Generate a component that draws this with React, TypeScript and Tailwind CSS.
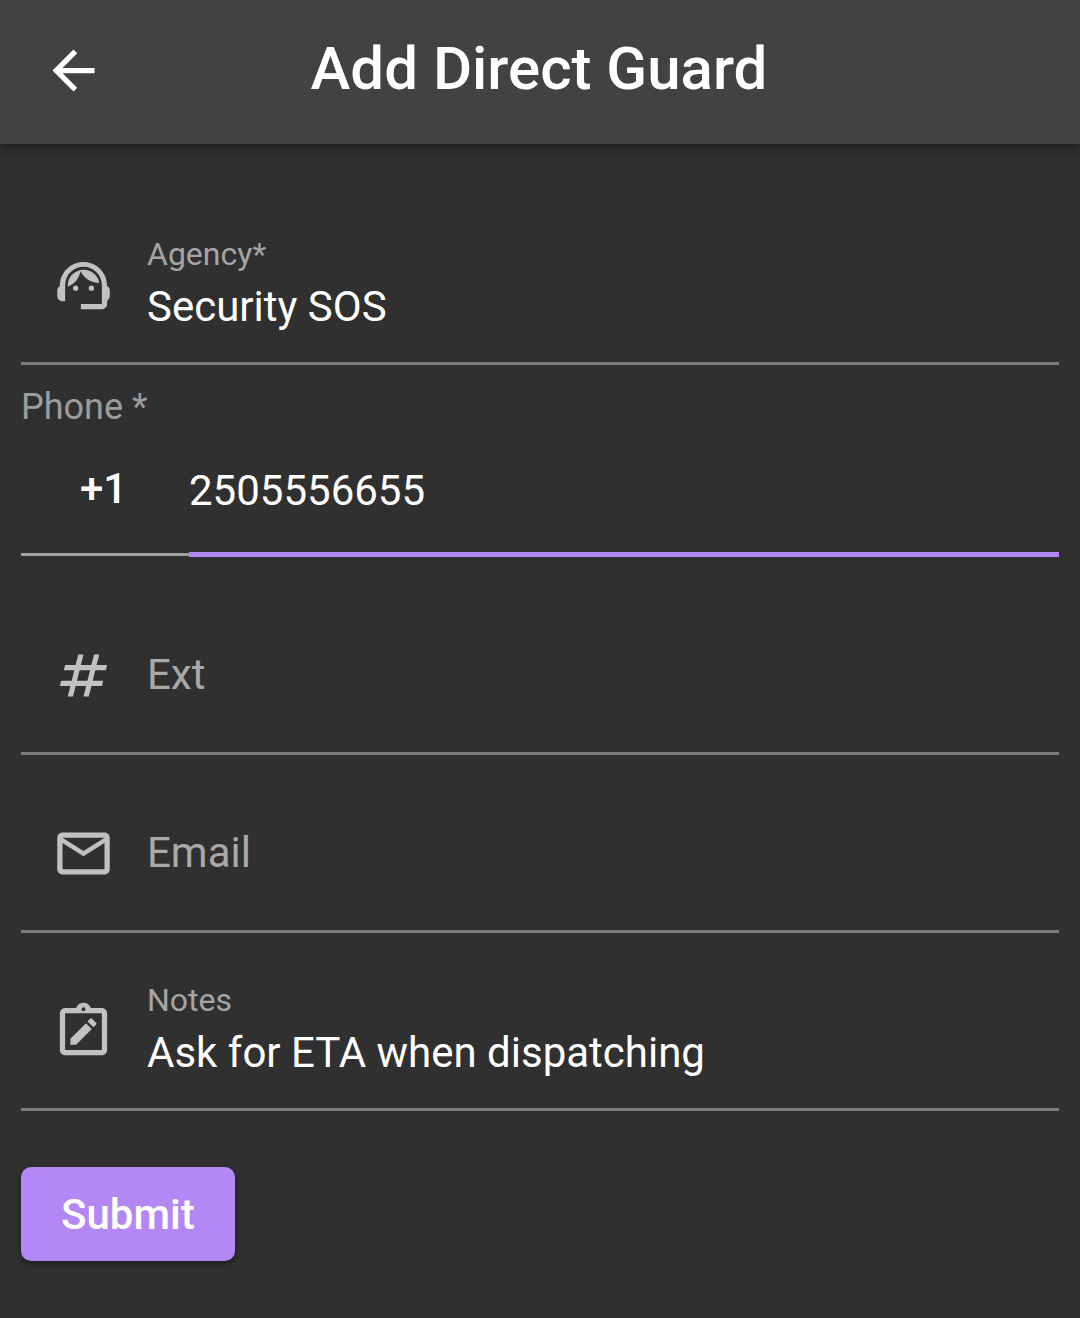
import React, { useState } from "react";
import { MdArrowBack, MdMailOutline, MdNumbers, MdSupportAgent } from "react-icons/md";

const ClipboardEdit = () => (
  <svg viewBox="0 0 24 24" fill="currentColor" className="h-[63px] w-[63px]" aria-hidden="true">
    <path
      fillRule="evenodd"
      d="M19 3h-4.18C14.4 1.84 13.3 1 12 1s-2.4.84-2.82 2H5c-1.1 0-2 .9-2 2v14c0 1.1.9 2 2 2h14c1.1 0 2-.9 2-2V5c0-1.1-.9-2-2-2zm-7-.25a.75.75 0 1 1 0 1.5.75.75 0 0 1 0-1.5zM5 5h14v14H5z"
    />
    <path d="M7 14.8V17h2.2l5.95-5.95-2.2-2.2zM16.85 8.75l-1.4-1.4-.2-.2a.55.55 0 0 0-.8 0l-.9 1.05 2.2 2.2 1.1-1.05a.5.5 0 0 0 0-.6z" />
  </svg>
);

type FieldProps = {
  name: string;
  label: string;
  icon: React.ReactNode;
  value: string;
  type?: string;
  onChange: (value: string) => void;
};

const Field = ({ name, label, icon, value, type = "text", onChange }: FieldProps) => {
  const filled = value !== "";

  return (
    <div className="flex h-[178px] border-b-[3px] border-[#7d7d7d] pl-[31px]">
      <div className="mt-[67px] w-[95px] shrink-0 text-[#c1c1c1]">{icon}</div>
      <div className={filled ? "flex min-w-0 flex-1 flex-col pt-[46px]" : "flex min-w-0 flex-1 flex-col pt-[66px]"}>
        {filled && (
          <label htmlFor={name} className="text-[32px] leading-[42px] text-[#a5a5a5]">
            {label}
          </label>
        )}
        <input
          id={name}
          name={name}
          type={type}
          value={value}
          aria-label={label}
          placeholder={label}
          onChange={(e) => onChange(e.target.value)}
          className="h-[62px] w-full bg-transparent text-[42px] text-white outline-none placeholder:text-[#a9a9a9]"
        />
      </div>
    </div>
  );
};

const App = () => {
  const [agency, setAgency] = useState("Security SOS");
  const [phone, setPhone] = useState("2505556655");
  const [ext, setExt] = useState("");
  const [email, setEmail] = useState("");
  const [notes, setNotes] = useState("Ask for ETA when dispatching");

  return (
    <div className="min-h-screen bg-[#303030] font-['Roboto',sans-serif] text-white">
      <header className="grid h-36 grid-cols-[126px_1fr_128px] items-center bg-[#424242] pb-1 shadow-[0_5px_11px_rgba(0,0,0,0.4)]">
        <button type="button" aria-label="Back" className="ml-[42px] h-[63px] w-[63px]">
          <MdArrowBack className="h-[63px] w-[63px]" />
        </button>
        <h1 className="pb-[2px] text-center text-[60px] leading-[88px] font-medium">Add Direct Guard</h1>
      </header>

      <form className="px-[21px] pt-[43px] pb-14" onSubmit={(e) => e.preventDefault()}>
        <Field
          name="agency"
          label="Agency*"
          icon={<MdSupportAgent className="h-[63px] w-[63px]" />}
          value={agency}
          onChange={setAgency}
        />

        <div className="mb-5 pt-5">
          <label htmlFor="phone" className="block text-[36px] leading-[44px] text-[#9c9c9c]">
            Phone *
          </label>
          <div className="flex h-32 items-start">
            <button
              type="button"
              aria-label="Country code +1"
              className="h-[127px] w-[168px] shrink-0 border-b-[3px] border-[#a0a0a0] pr-[3px] pb-[6px] text-[42px] font-medium"
            >
              +1
            </button>
            <input
              id="phone"
              name="phone"
              type="tel"
              value={phone}
              onChange={(e) => setPhone(e.target.value)}
              className="h-32 min-w-0 flex-1 border-b-[5px] border-[#b388f5] bg-transparent text-[42px] outline-none"
            />
          </div>
        </div>

        <Field
          name="ext"
          label="Ext"
          icon={<MdNumbers className="h-[63px] w-[63px]" />}
          value={ext}
          onChange={setExt}
        />
        <Field
          name="email"
          label="Email"
          type="email"
          icon={<MdMailOutline className="h-[63px] w-[63px]" />}
          value={email}
          onChange={setEmail}
        />
        <Field name="notes" label="Notes" icon={<ClipboardEdit />} value={notes} onChange={setNotes} />

        <button
          type="submit"
          className="mt-14 h-[94px] rounded-[10px] bg-[#b388f5] px-10 text-[42px] font-medium shadow-[0_3px_6px_rgba(0,0,0,0.4)]"
        >
          Submit
        </button>
      </form>
    </div>
  );
};

export default App;
